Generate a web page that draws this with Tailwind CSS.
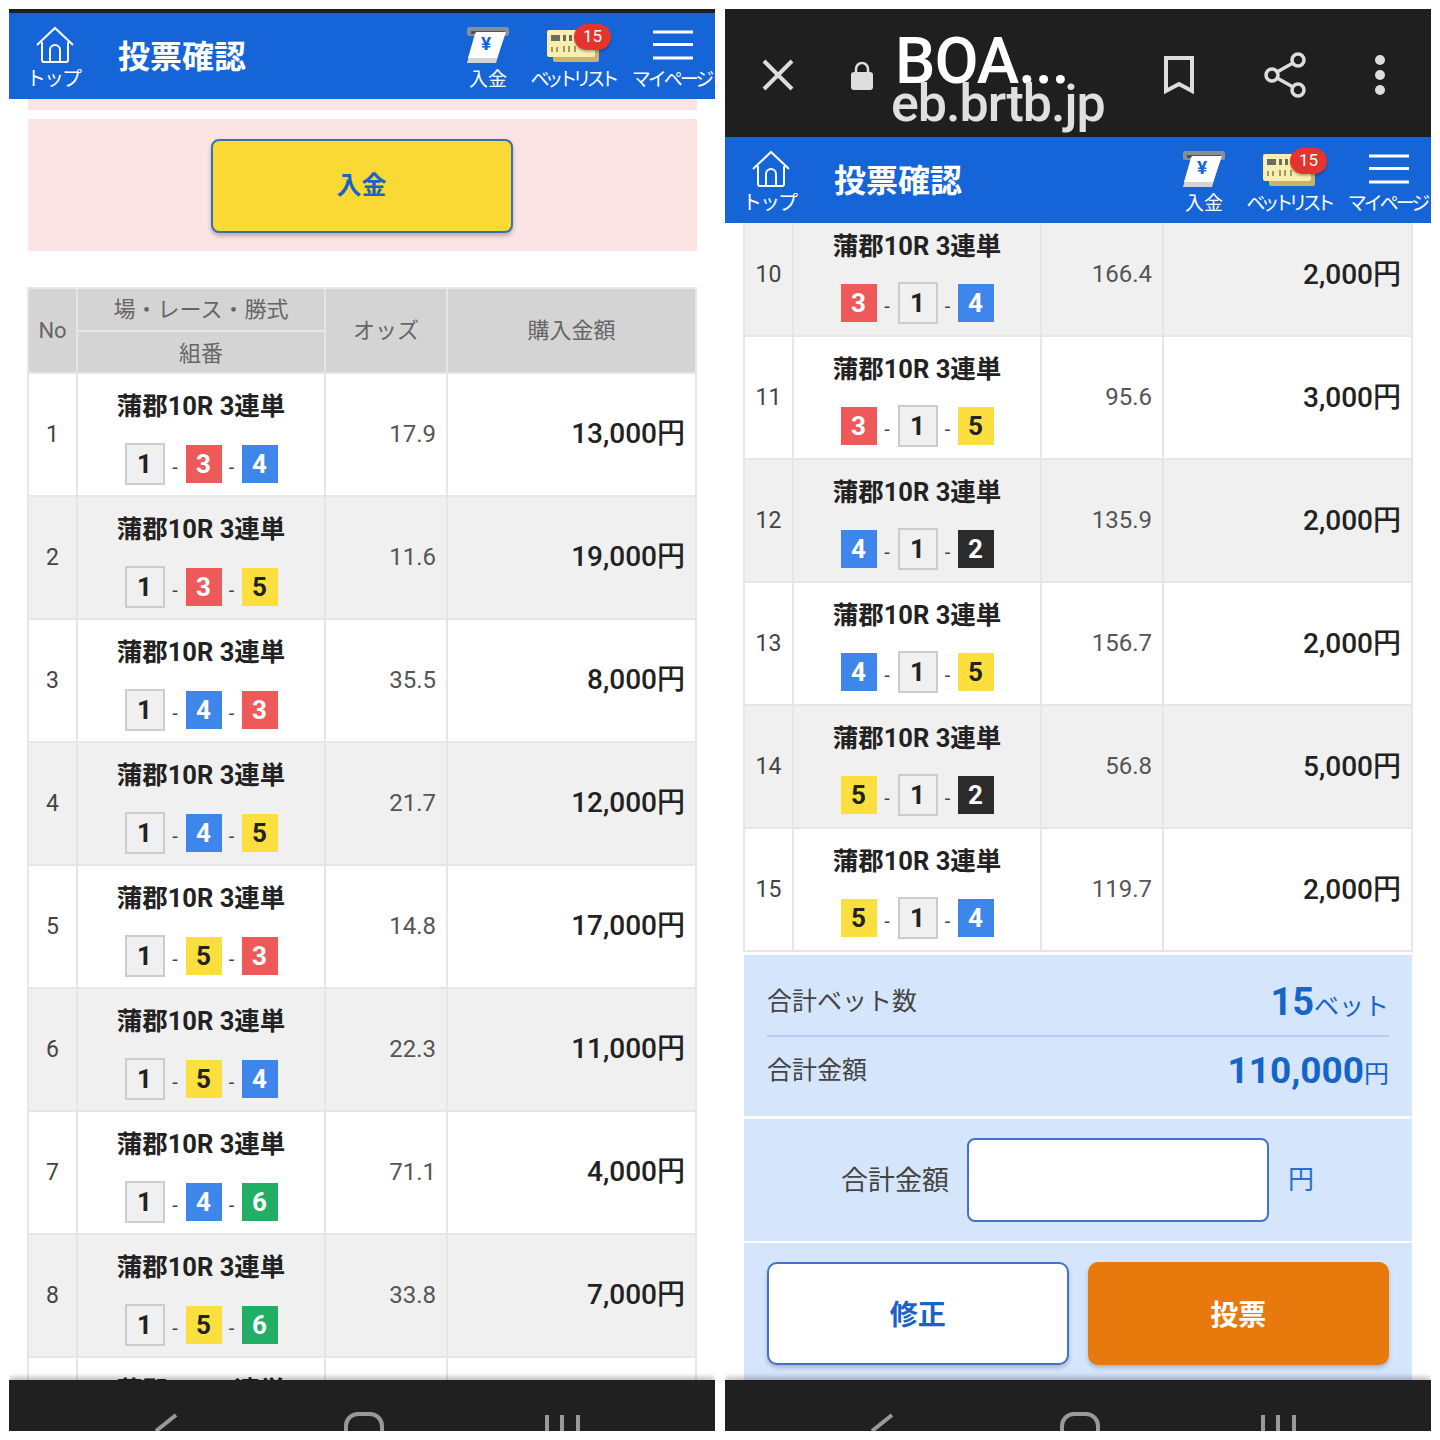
<!DOCTYPE html>
<html lang="ja">
<head>
<meta charset="utf-8">
<title>投票確認</title>
<script src="https://cdn.jsdelivr.net/npm/@tailwindcss/browser@4"></script>
</head>
<body class="bg-white font-['Roboto','Noto_Sans_CJK_JP',sans-serif]">
<div class="w-[1440px] h-[1440px] pt-[9px] pl-[9px] flex gap-[10px]">

<!-- left phone -->
<div class="w-[706px] h-[1422px] flex flex-col overflow-hidden">
    <div class="h-[4px] bg-[#1c1f26] shrink-0"></div>
    <header class="h-[86px] shrink-0 bg-[#1565d8] text-white flex">
        <div class="w-[92px] flex flex-col items-center pt-[13px]">
            <svg class="w-[38px] h-[38px] shrink-0" viewBox="0 0 38 38" fill="none" stroke="white" stroke-width="2"><path d="M1 19 19 2l18 17"/><path d="M6 16v18a2 2 0 0 0 2 2h22a2 2 0 0 0 2-2V16"/><path d="M14 36V24a5 5 0 0 1 10 0v12"/></svg>
            <span class="text-[20px] leading-[28px] tracking-[-2px] mt-[1px] -ml-[4px]">トップ</span>
        </div>
        <h1 class="ml-[17px] text-[32px] font-bold leading-[88px] w-[340px]">投票確認</h1>
        <div class="w-[60px] flex flex-col items-center pt-[13px]">
            <svg class="w-[44px] h-[38px] shrink-0" viewBox="0 0 44 38"><rect x="1" y="1" width="42" height="9" rx="2" fill="#8a8d92"/><rect x="5" y="5" width="34" height="3" fill="#4d5157"/><path d="M9 7h30l-9 30H1z" fill="#d4d4d4"/><path d="M10 6h30l-9 26H2z" fill="#fff"/><text x="20" y="24" font-size="19" font-weight="700" text-anchor="middle" fill="#1565d8">¥</text></svg>
            <span class="text-[19px] leading-[28px] mt-[2px]">入金</span>
        </div>
        <div class="w-[88px] ml-[13px] flex flex-col items-center pt-[13px] relative">
            <svg class="w-[62px] h-[38px] shrink-0" viewBox="0 0 62 38"><rect x="9" y="12" width="46" height="24" rx="2" fill="#c9b566"/><rect x="3" y="4" width="48" height="27" rx="2" fill="#f7eeb0"/><rect x="7" y="9" width="9" height="6" fill="#6b6b5c"/><rect x="19" y="9" width="3" height="6" fill="#6b6b5c"/><rect x="25" y="9" width="3" height="6" fill="#6b6b5c"/><path d="M8 21v5M13 21v5M20 20v6M25 20v6M31 20v6" stroke="#a39a60" stroke-width="2"/></svg>
            <span class="absolute left-[43px] top-[11px] w-[37px] h-[26px] rounded-full bg-[#e5342e] text-[17px] leading-[25px] text-center shadow-[0_2px_2px_rgba(0,0,0,.25)]">15</span>
            <span class="text-[19px] leading-[28px] mt-[2px] tracking-[-5px] whitespace-nowrap pr-[5px]">ベットリスト</span>
        </div>
        <div class="w-[84px] ml-[12px] flex flex-col items-center pt-[13px]">
            <svg class="w-[40px] h-[38px] shrink-0" viewBox="0 0 40 38" fill="none" stroke="white" stroke-width="3"><path d="M0 6h40M0 18.500h40M0 32h40"/></svg>
            <span class="text-[19px] leading-[28px] mt-[2px] tracking-[-3px] whitespace-nowrap pr-[3px]">マイページ</span>
        </div>
    </header>
    <main class="flex-1 overflow-hidden pl-[19px] pr-[18px]">
        <div class="h-[11px] bg-[#fce4e4]"></div>
        <div class="h-[132px] mt-[9px] bg-[#fce4e4] flex items-center justify-center">
            <button class="w-[302px] h-[94px] mt-[2px] -ml-[2px] rounded-[8px] bg-[#fbd934] border-2 border-[#3a6db5] shadow-[0_3px_4px_rgba(0,0,0,.25)] text-[#1a62c5] text-[25px] font-bold">入金</button>
        </div>
        <table class="mt-[36px] -ml-[1px] w-[668px] table-fixed border-collapse text-[#444] [&_td]:border-2 [&_td]:border-[#e6e6e6] [&_th]:border-2 [&_th]:border-[#e6e6e6] [&_th]:font-normal [&_th]:text-[#666] [&_th]:text-[22px]">
            <colgroup><col class="w-[49px]"><col class="w-[248px]"><col class="w-[122px]"><col class="w-[249px]"></colgroup>
            <thead class="bg-[#d4d4d4]">
                <tr class="h-[43px]"><th rowspan="2">No</th><th>場・レース・勝式</th><th rowspan="2">オッズ</th><th rowspan="2">購入金額</th></tr>
                <tr class="h-[42px]"><th class="pt-[3px]">組番</th></tr>
            </thead>
            <tbody>
                <tr class="h-[123px] bg-white"><td class="text-center text-[23px] pt-[2px]">1</td><td class="align-top pt-[14px] text-center"><div class="h-[36px] leading-[36px] text-[25.500px] font-bold text-[#222]">蒲郡10R 3連単</div><div class="mt-[19px] flex items-center justify-center"><span class="w-[40px] h-[42px] bg-[#f0f0f0] border-2 border-[#ccc] text-[26px] leading-[38px] font-bold text-[#222]">1</span><span class="w-[21px] text-[20px] pt-[6px]">-</span><span class="w-[36px] h-[38px] bg-[#ee5a5a] text-[26px] leading-[38px] font-bold text-white">3</span><span class="w-[20px] text-[20px] pt-[6px]">-</span><span class="w-[36px] h-[38px] bg-[#3f86ea] text-[26px] leading-[38px] font-bold text-white">4</span></div></td><td class="text-right pr-[10px] pb-[2px] text-[24px] text-[#555]">17.9</td><td class="text-right pr-[10px] pb-[2px] text-[28px] font-medium text-[#222]">13,000円</td></tr>
                <tr class="h-[123px] bg-[#f0f0f0]"><td class="text-center text-[23px] pt-[2px]">2</td><td class="align-top pt-[14px] text-center"><div class="h-[36px] leading-[36px] text-[25.500px] font-bold text-[#222]">蒲郡10R 3連単</div><div class="mt-[19px] flex items-center justify-center"><span class="w-[40px] h-[42px] bg-[#f0f0f0] border-2 border-[#ccc] text-[26px] leading-[38px] font-bold text-[#222]">1</span><span class="w-[21px] text-[20px] pt-[6px]">-</span><span class="w-[36px] h-[38px] bg-[#ee5a5a] text-[26px] leading-[38px] font-bold text-white">3</span><span class="w-[20px] text-[20px] pt-[6px]">-</span><span class="w-[36px] h-[38px] bg-[#fbdf3f] text-[26px] leading-[38px] font-bold text-[#222]">5</span></div></td><td class="text-right pr-[10px] pb-[2px] text-[24px] text-[#555]">11.6</td><td class="text-right pr-[10px] pb-[2px] text-[28px] font-medium text-[#222]">19,000円</td></tr>
                <tr class="h-[123px] bg-white"><td class="text-center text-[23px] pt-[2px]">3</td><td class="align-top pt-[14px] text-center"><div class="h-[36px] leading-[36px] text-[25.500px] font-bold text-[#222]">蒲郡10R 3連単</div><div class="mt-[19px] flex items-center justify-center"><span class="w-[40px] h-[42px] bg-[#f0f0f0] border-2 border-[#ccc] text-[26px] leading-[38px] font-bold text-[#222]">1</span><span class="w-[21px] text-[20px] pt-[6px]">-</span><span class="w-[36px] h-[38px] bg-[#3f86ea] text-[26px] leading-[38px] font-bold text-white">4</span><span class="w-[20px] text-[20px] pt-[6px]">-</span><span class="w-[36px] h-[38px] bg-[#ee5a5a] text-[26px] leading-[38px] font-bold text-white">3</span></div></td><td class="text-right pr-[10px] pb-[2px] text-[24px] text-[#555]">35.5</td><td class="text-right pr-[10px] pb-[2px] text-[28px] font-medium text-[#222]">8,000円</td></tr>
                <tr class="h-[123px] bg-[#f0f0f0]"><td class="text-center text-[23px] pt-[2px]">4</td><td class="align-top pt-[14px] text-center"><div class="h-[36px] leading-[36px] text-[25.500px] font-bold text-[#222]">蒲郡10R 3連単</div><div class="mt-[19px] flex items-center justify-center"><span class="w-[40px] h-[42px] bg-[#f0f0f0] border-2 border-[#ccc] text-[26px] leading-[38px] font-bold text-[#222]">1</span><span class="w-[21px] text-[20px] pt-[6px]">-</span><span class="w-[36px] h-[38px] bg-[#3f86ea] text-[26px] leading-[38px] font-bold text-white">4</span><span class="w-[20px] text-[20px] pt-[6px]">-</span><span class="w-[36px] h-[38px] bg-[#fbdf3f] text-[26px] leading-[38px] font-bold text-[#222]">5</span></div></td><td class="text-right pr-[10px] pb-[2px] text-[24px] text-[#555]">21.7</td><td class="text-right pr-[10px] pb-[2px] text-[28px] font-medium text-[#222]">12,000円</td></tr>
                <tr class="h-[123px] bg-white"><td class="text-center text-[23px] pt-[2px]">5</td><td class="align-top pt-[14px] text-center"><div class="h-[36px] leading-[36px] text-[25.500px] font-bold text-[#222]">蒲郡10R 3連単</div><div class="mt-[19px] flex items-center justify-center"><span class="w-[40px] h-[42px] bg-[#f0f0f0] border-2 border-[#ccc] text-[26px] leading-[38px] font-bold text-[#222]">1</span><span class="w-[21px] text-[20px] pt-[6px]">-</span><span class="w-[36px] h-[38px] bg-[#fbdf3f] text-[26px] leading-[38px] font-bold text-[#222]">5</span><span class="w-[20px] text-[20px] pt-[6px]">-</span><span class="w-[36px] h-[38px] bg-[#ee5a5a] text-[26px] leading-[38px] font-bold text-white">3</span></div></td><td class="text-right pr-[10px] pb-[2px] text-[24px] text-[#555]">14.8</td><td class="text-right pr-[10px] pb-[2px] text-[28px] font-medium text-[#222]">17,000円</td></tr>
                <tr class="h-[123px] bg-[#f0f0f0]"><td class="text-center text-[23px] pt-[2px]">6</td><td class="align-top pt-[14px] text-center"><div class="h-[36px] leading-[36px] text-[25.500px] font-bold text-[#222]">蒲郡10R 3連単</div><div class="mt-[19px] flex items-center justify-center"><span class="w-[40px] h-[42px] bg-[#f0f0f0] border-2 border-[#ccc] text-[26px] leading-[38px] font-bold text-[#222]">1</span><span class="w-[21px] text-[20px] pt-[6px]">-</span><span class="w-[36px] h-[38px] bg-[#fbdf3f] text-[26px] leading-[38px] font-bold text-[#222]">5</span><span class="w-[20px] text-[20px] pt-[6px]">-</span><span class="w-[36px] h-[38px] bg-[#3f86ea] text-[26px] leading-[38px] font-bold text-white">4</span></div></td><td class="text-right pr-[10px] pb-[2px] text-[24px] text-[#555]">22.3</td><td class="text-right pr-[10px] pb-[2px] text-[28px] font-medium text-[#222]">11,000円</td></tr>
                <tr class="h-[123px] bg-white"><td class="text-center text-[23px] pt-[2px]">7</td><td class="align-top pt-[14px] text-center"><div class="h-[36px] leading-[36px] text-[25.500px] font-bold text-[#222]">蒲郡10R 3連単</div><div class="mt-[19px] flex items-center justify-center"><span class="w-[40px] h-[42px] bg-[#f0f0f0] border-2 border-[#ccc] text-[26px] leading-[38px] font-bold text-[#222]">1</span><span class="w-[21px] text-[20px] pt-[6px]">-</span><span class="w-[36px] h-[38px] bg-[#3f86ea] text-[26px] leading-[38px] font-bold text-white">4</span><span class="w-[20px] text-[20px] pt-[6px]">-</span><span class="w-[36px] h-[38px] bg-[#22ae64] text-[26px] leading-[38px] font-bold text-white">6</span></div></td><td class="text-right pr-[10px] pb-[2px] text-[24px] text-[#555]">71.1</td><td class="text-right pr-[10px] pb-[2px] text-[28px] font-medium text-[#222]">4,000円</td></tr>
                <tr class="h-[123px] bg-[#f0f0f0]"><td class="text-center text-[23px] pt-[2px]">8</td><td class="align-top pt-[14px] text-center"><div class="h-[36px] leading-[36px] text-[25.500px] font-bold text-[#222]">蒲郡10R 3連単</div><div class="mt-[19px] flex items-center justify-center"><span class="w-[40px] h-[42px] bg-[#f0f0f0] border-2 border-[#ccc] text-[26px] leading-[38px] font-bold text-[#222]">1</span><span class="w-[21px] text-[20px] pt-[6px]">-</span><span class="w-[36px] h-[38px] bg-[#fbdf3f] text-[26px] leading-[38px] font-bold text-[#222]">5</span><span class="w-[20px] text-[20px] pt-[6px]">-</span><span class="w-[36px] h-[38px] bg-[#22ae64] text-[26px] leading-[38px] font-bold text-white">6</span></div></td><td class="text-right pr-[10px] pb-[2px] text-[24px] text-[#555]">33.8</td><td class="text-right pr-[10px] pb-[2px] text-[28px] font-medium text-[#222]">7,000円</td></tr>
                <tr class="h-[123px] bg-white"><td></td><td class="align-top pt-[14px] text-center"><div class="h-[36px] leading-[36px] text-[25.500px] font-bold text-[#222]">蒲郡10R 3連単</div></td><td></td><td></td></tr>
            </tbody>
        </table>
    </main>
    <footer class="h-[51px] shrink-0 bg-[#202020] shadow-[0_-3px_5px_rgba(0,0,0,.25)] relative">
        <svg class="w-[706px] h-[51px]" viewBox="0 0 706 51" fill="none" stroke="#999" stroke-width="4"><path d="M167 35 147 51"/><path d="M337 51V46a12 12 0 0 1 12-12h12a12 12 0 0 1 12 12v5"/><path d="M538 35v16M553 35v16M569 35v16"/></svg>
    </footer>
</div>

<!-- right phone -->
<div class="w-[706px] h-[1422px] flex flex-col overflow-hidden">
    <div class="h-[128px] shrink-0 bg-[#1f1f1f] flex relative z-10">
        <svg class="w-[32px] h-[32px] ml-[37px] mt-[50px]" viewBox="0 0 32 32" stroke="#ddd" stroke-width="4"><path d="M2 2l28 28M30 2 2 30"/></svg>
        <svg class="w-[24px] h-[30px] ml-[56px] mt-[52px]" viewBox="0 0 24 30" fill="#ddd"><path d="M6 12V8a6 6 0 0 1 12 0v4" fill="none" stroke="#ddd" stroke-width="2.500"/><rect x="1" y="11" width="22" height="18" rx="3"/></svg>
        <div class="w-[290px] ml-[21px] -mt-[2px] flex flex-col">
            <span class="text-[64px] leading-[70px] mt-[20px] font-medium tracking-[-1px] text-white">BOA...</span>
            <span class="text-[52px] leading-[56px] -mt-[21px] -ml-[4px] font-medium tracking-[-1px] text-[#e0e0e0]">eb.brtb.jp</span>
        </div>
        <svg class="w-[32px] h-[40px] ml-[-22px] mt-[46px]" viewBox="0 0 32 40" fill="none" stroke="#ddd" stroke-width="4"><path d="M3 3h26v33l-13-7-13 7z"/></svg>
        <svg class="w-[42px] h-[46px] ml-[69px] mt-[43px]" viewBox="0 0 42 46" fill="none" stroke="#ddd" stroke-width="3.500"><circle cx="8" cy="23" r="6"/><circle cx="34" cy="8" r="6"/><circle cx="34" cy="38" r="6"/><path d="M13 20 29 11M13 26l16 9"/></svg>
        <svg class="w-[12px] h-[42px] ml-[68px] mt-[45px]" viewBox="0 0 12 42" fill="#ddd"><circle cx="6" cy="6" r="5"/><circle cx="6" cy="21" r="5"/><circle cx="6" cy="36" r="5"/></svg>
    </div>
    <header class="h-[86px] shrink-0 bg-[#1565d8] text-white flex relative z-10">
        <div class="w-[92px] flex flex-col items-center pt-[13px]">
            <svg class="w-[38px] h-[38px] shrink-0" viewBox="0 0 38 38" fill="none" stroke="white" stroke-width="2"><path d="M1 19 19 2l18 17"/><path d="M6 16v18a2 2 0 0 0 2 2h22a2 2 0 0 0 2-2V16"/><path d="M14 36V24a5 5 0 0 1 10 0v12"/></svg>
            <span class="text-[20px] leading-[28px] tracking-[-2px] mt-[1px] -ml-[4px]">トップ</span>
        </div>
        <h1 class="ml-[17px] text-[32px] font-bold leading-[88px] w-[340px]">投票確認</h1>
        <div class="w-[60px] flex flex-col items-center pt-[13px]">
            <svg class="w-[44px] h-[38px] shrink-0" viewBox="0 0 44 38"><rect x="1" y="1" width="42" height="9" rx="2" fill="#8a8d92"/><rect x="5" y="5" width="34" height="3" fill="#4d5157"/><path d="M9 7h30l-9 30H1z" fill="#d4d4d4"/><path d="M10 6h30l-9 26H2z" fill="#fff"/><text x="20" y="24" font-size="19" font-weight="700" text-anchor="middle" fill="#1565d8">¥</text></svg>
            <span class="text-[19px] leading-[28px] mt-[2px]">入金</span>
        </div>
        <div class="w-[88px] ml-[13px] flex flex-col items-center pt-[13px] relative">
            <svg class="w-[62px] h-[38px] shrink-0" viewBox="0 0 62 38"><rect x="9" y="12" width="46" height="24" rx="2" fill="#c9b566"/><rect x="3" y="4" width="48" height="27" rx="2" fill="#f7eeb0"/><rect x="7" y="9" width="9" height="6" fill="#6b6b5c"/><rect x="19" y="9" width="3" height="6" fill="#6b6b5c"/><rect x="25" y="9" width="3" height="6" fill="#6b6b5c"/><path d="M8 21v5M13 21v5M20 20v6M25 20v6M31 20v6" stroke="#a39a60" stroke-width="2"/></svg>
            <span class="absolute left-[43px] top-[11px] w-[37px] h-[26px] rounded-full bg-[#e5342e] text-[17px] leading-[25px] text-center shadow-[0_2px_2px_rgba(0,0,0,.25)]">15</span>
            <span class="text-[19px] leading-[28px] mt-[2px] tracking-[-5px] whitespace-nowrap pr-[5px]">ベットリスト</span>
        </div>
        <div class="w-[84px] ml-[12px] flex flex-col items-center pt-[13px]">
            <svg class="w-[40px] h-[38px] shrink-0" viewBox="0 0 40 38" fill="none" stroke="white" stroke-width="3"><path d="M0 6h40M0 18.500h40M0 32h40"/></svg>
            <span class="text-[19px] leading-[28px] mt-[2px] tracking-[-3px] whitespace-nowrap pr-[3px]">マイページ</span>
        </div>
    </header>
    <main class="flex-1 overflow-hidden pl-[19px] pr-[19px]">
        <table class="-mt-[11px] -ml-[1px] w-[668px] table-fixed border-collapse text-[#444] [&_td]:border-2 [&_td]:border-[#e6e6e6]">
            <colgroup><col class="w-[49px]"><col class="w-[248px]"><col class="w-[122px]"><col class="w-[249px]"></colgroup>
            <tbody>
                <tr class="h-[123px] bg-[#f0f0f0]"><td class="text-center text-[23px] pt-[2px]">10</td><td class="align-top pt-[14px] text-center"><div class="h-[36px] leading-[36px] text-[25.500px] font-bold text-[#222]">蒲郡10R 3連単</div><div class="mt-[18px] flex items-center justify-center"><span class="w-[36px] h-[38px] bg-[#ee5a5a] text-[26px] leading-[38px] font-bold text-white">3</span><span class="w-[21px] text-[20px] pt-[6px]">-</span><span class="w-[40px] h-[42px] bg-[#f0f0f0] border-2 border-[#ccc] text-[26px] leading-[38px] font-bold text-[#222]">1</span><span class="w-[20px] text-[20px] pt-[6px]">-</span><span class="w-[36px] h-[38px] bg-[#3f86ea] text-[26px] leading-[38px] font-bold text-white">4</span></div></td><td class="text-right pr-[10px] pb-[2px] text-[24px] text-[#555]">166.4</td><td class="text-right pr-[10px] text-[28px] font-medium text-[#222]">2,000円</td></tr>
                <tr class="h-[123px] bg-white"><td class="text-center text-[23px] pt-[2px]">11</td><td class="align-top pt-[14px] text-center"><div class="h-[36px] leading-[36px] text-[25.500px] font-bold text-[#222]">蒲郡10R 3連単</div><div class="mt-[18px] flex items-center justify-center"><span class="w-[36px] h-[38px] bg-[#ee5a5a] text-[26px] leading-[38px] font-bold text-white">3</span><span class="w-[21px] text-[20px] pt-[6px]">-</span><span class="w-[40px] h-[42px] bg-[#f0f0f0] border-2 border-[#ccc] text-[26px] leading-[38px] font-bold text-[#222]">1</span><span class="w-[20px] text-[20px] pt-[6px]">-</span><span class="w-[36px] h-[38px] bg-[#fbdf3f] text-[26px] leading-[38px] font-bold text-[#222]">5</span></div></td><td class="text-right pr-[10px] pb-[2px] text-[24px] text-[#555]">95.6</td><td class="text-right pr-[10px] text-[28px] font-medium text-[#222]">3,000円</td></tr>
                <tr class="h-[123px] bg-[#f0f0f0]"><td class="text-center text-[23px] pt-[2px]">12</td><td class="align-top pt-[14px] text-center"><div class="h-[36px] leading-[36px] text-[25.500px] font-bold text-[#222]">蒲郡10R 3連単</div><div class="mt-[18px] flex items-center justify-center"><span class="w-[36px] h-[38px] bg-[#3f86ea] text-[26px] leading-[38px] font-bold text-white">4</span><span class="w-[21px] text-[20px] pt-[6px]">-</span><span class="w-[40px] h-[42px] bg-[#f0f0f0] border-2 border-[#ccc] text-[26px] leading-[38px] font-bold text-[#222]">1</span><span class="w-[20px] text-[20px] pt-[6px]">-</span><span class="w-[36px] h-[38px] bg-[#2b2b2b] text-[26px] leading-[38px] font-bold text-white">2</span></div></td><td class="text-right pr-[10px] pb-[2px] text-[24px] text-[#555]">135.9</td><td class="text-right pr-[10px] text-[28px] font-medium text-[#222]">2,000円</td></tr>
                <tr class="h-[123px] bg-white"><td class="text-center text-[23px] pt-[2px]">13</td><td class="align-top pt-[14px] text-center"><div class="h-[36px] leading-[36px] text-[25.500px] font-bold text-[#222]">蒲郡10R 3連単</div><div class="mt-[18px] flex items-center justify-center"><span class="w-[36px] h-[38px] bg-[#3f86ea] text-[26px] leading-[38px] font-bold text-white">4</span><span class="w-[21px] text-[20px] pt-[6px]">-</span><span class="w-[40px] h-[42px] bg-[#f0f0f0] border-2 border-[#ccc] text-[26px] leading-[38px] font-bold text-[#222]">1</span><span class="w-[20px] text-[20px] pt-[6px]">-</span><span class="w-[36px] h-[38px] bg-[#fbdf3f] text-[26px] leading-[38px] font-bold text-[#222]">5</span></div></td><td class="text-right pr-[10px] pb-[2px] text-[24px] text-[#555]">156.7</td><td class="text-right pr-[10px] text-[28px] font-medium text-[#222]">2,000円</td></tr>
                <tr class="h-[123px] bg-[#f0f0f0]"><td class="text-center text-[23px] pt-[2px]">14</td><td class="align-top pt-[14px] text-center"><div class="h-[36px] leading-[36px] text-[25.500px] font-bold text-[#222]">蒲郡10R 3連単</div><div class="mt-[18px] flex items-center justify-center"><span class="w-[36px] h-[38px] bg-[#fbdf3f] text-[26px] leading-[38px] font-bold text-[#222]">5</span><span class="w-[21px] text-[20px] pt-[6px]">-</span><span class="w-[40px] h-[42px] bg-[#f0f0f0] border-2 border-[#ccc] text-[26px] leading-[38px] font-bold text-[#222]">1</span><span class="w-[20px] text-[20px] pt-[6px]">-</span><span class="w-[36px] h-[38px] bg-[#2b2b2b] text-[26px] leading-[38px] font-bold text-white">2</span></div></td><td class="text-right pr-[10px] pb-[2px] text-[24px] text-[#555]">56.8</td><td class="text-right pr-[10px] text-[28px] font-medium text-[#222]">5,000円</td></tr>
                <tr class="h-[123px] bg-white"><td class="text-center text-[23px] pt-[2px]">15</td><td class="align-top pt-[14px] text-center"><div class="h-[36px] leading-[36px] text-[25.500px] font-bold text-[#222]">蒲郡10R 3連単</div><div class="mt-[18px] flex items-center justify-center"><span class="w-[36px] h-[38px] bg-[#fbdf3f] text-[26px] leading-[38px] font-bold text-[#222]">5</span><span class="w-[21px] text-[20px] pt-[6px]">-</span><span class="w-[40px] h-[42px] bg-[#f0f0f0] border-2 border-[#ccc] text-[26px] leading-[38px] font-bold text-[#222]">1</span><span class="w-[20px] text-[20px] pt-[6px]">-</span><span class="w-[36px] h-[38px] bg-[#3f86ea] text-[26px] leading-[38px] font-bold text-white">4</span></div></td><td class="text-right pr-[10px] pb-[2px] text-[24px] text-[#555]">119.7</td><td class="text-right pr-[10px] text-[28px] font-medium text-[#222]">2,000円</td></tr>
            </tbody>
        </table>
        <section class="mt-[3px] w-[668px] h-[161px] bg-[#d5e5fb] px-[23px] text-[#444]">
            <div class="h-[82px] pt-[14px] border-b-2 border-[#b5cdec] flex justify-between items-center">
                <span class="text-[25px]">合計ベット数</span>
                <span class="text-[#1565c8] text-[25px]"><b class="text-[38px]">15</b>ベット</span>
            </div>
            <div class="h-[68px] flex justify-between items-center">
                <span class="text-[25px]">合計金額</span>
                <span class="text-[#1565c8] text-[25px]"><b class="text-[37px]">110,000</b>円</span>
            </div>
        </section>
        <section class="mt-[3px] w-[668px] h-[122px] bg-[#d5e5fb] flex items-center">
            <span class="ml-[97px] w-[107px] text-[27px] pt-[2px] text-[#444] whitespace-nowrap">合計金額</span>
            <div class="ml-[19px] w-[302px] h-[84px] bg-white border-2 border-[#3f74c9] rounded-[8px]"></div>
            <span class="ml-[19px] text-[26px] text-[#2a6fc9]">円</span>
        </section>
        <section class="mt-[2px] w-[668px] h-[150px] bg-[#d5e5fb] flex gap-[19px] px-[23px] pt-[19px]">
            <button class="w-[302px] h-[103px] pt-[4px] bg-white border-2 border-[#3f74c9] rounded-[10px] shadow-[0_3px_4px_rgba(0,0,0,.2)] text-[#1a62c5] text-[28px] font-bold">修正</button>
            <button class="w-[302px] h-[103px] pt-[4px] bg-[#e8790c] rounded-[10px] shadow-[0_3px_4px_rgba(0,0,0,.2)] text-white text-[28px] font-bold">投票</button>
        </section>
    </main>
    <footer class="h-[51px] shrink-0 bg-[#202020] shadow-[0_-3px_5px_rgba(0,0,0,.25)] relative">
        <svg class="w-[706px] h-[51px]" viewBox="0 0 706 51" fill="none" stroke="#999" stroke-width="4"><path d="M167 35 147 51"/><path d="M337 51V46a12 12 0 0 1 12-12h12a12 12 0 0 1 12 12v5"/><path d="M538 35v16M553 35v16M569 35v16"/></svg>
    </footer>
</div>

</div>
</body>
</html>
